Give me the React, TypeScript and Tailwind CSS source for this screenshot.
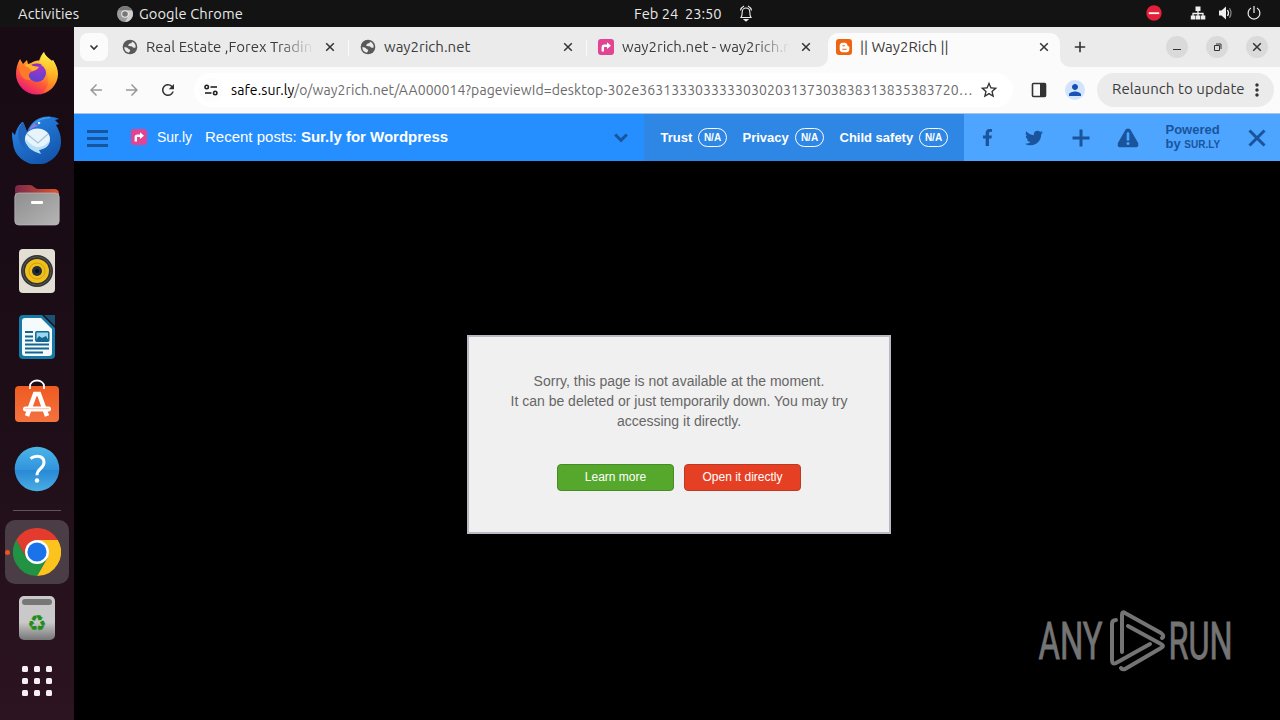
import React from "react";
import { FaBloggerB, FaFacebookF, FaTwitter } from "react-icons/fa";
import { MdArrowBack, MdArrowForward, MdMoreVert, MdPerson, MdRefresh, MdStarBorder } from "react-icons/md";

type TabProps = {
  title: string;
  icon: React.ReactNode;
  active?: boolean;
  divider?: boolean;
  textClass?: string;
};

// hex encoded part of the pageview id, one byte per entry
const pageviewBytes = "30 2e 36 31 33 30 33 33 30 30 20 31 37 30 38 38 31 38 35 38 37 20".split(" ");

const CloseIcon = ({ className = "" }: { className?: string }) => (
  <svg width="16" height="16" viewBox="0 0 16 16" className={className} fill="none" stroke="currentColor" strokeWidth="1.5">
    <path d="M4.2 4.2l7.6 7.6M11.8 4.2l-7.6 7.6" />
  </svg>
);

const GlobeIcon = () => (
  <svg width="16" height="16" viewBox="0 0 16 16" className="-mt-1.5">
    <circle cx="8" cy="8" r="7.300" fill="#58595b" />
    <path d="M7 2.300c2 .2 2.800 1 2.500 2.200C9 6 7.500 5.600 6.800 6.800c-.3.900 1 1 2.200 1 1.600 0 1.700 1.500 1 2.200-1 .8-1.600 1.200-1.400 3.700a5.800 5.800 0 0 0 5-4.200c-.8-.6-1-1.400-1-2.300 0-1.300-.4-2-1.600-2.600.3-.7.600-1 .800-1.400A5.800 5.800 0 0 0 7 2.300z" fill="#ebebeb" opacity="0" />
    <path d="M2.200 8.300c1.500-.2 3 .2 4.200 1.500.7.700 1.800.6 1.800 1.500 0 1-1 1.200-1.200 2.500a5.900 5.900 0 0 1-4.800-5.500z" fill="#ebebeb" />
    <path d="M9.800 2.400c.3 1-.2 1.700-1.300 1.900-1 .1-1.200.8-1.800 1.200-.8.500-.7 1.400.3 1.600 1.200.3 2.500-.2 3.300.6.900.9 1.500 1.500 3.300.9.500-2.700-1-5.200-3.800-6.200z" fill="#ebebeb" />
  </svg>
);

const SurlyIcon = ({ size = 16 }: { size?: number }) => (
  <svg width={size} height={size} viewBox="0 0 16 16" className="shrink-0">
    <rect width="16" height="16" rx="3" fill="#e14493" />
    <path d="M4.8 12.5V8.2Q4.8 6.7 6.3 6.7H10" fill="none" stroke="#fff" strokeWidth="2.4" />
    <path d="M9 3.3l4 3.4-4 3.4z" fill="#fff" />
  </svg>
);

function Tab({ title, icon, active, divider, textClass = "" }: TabProps) {
  return (
    <div className="w-[238px] h-[34px] flex shrink-0">
      <div className={`relative w-[232px] h-full pl-2 flex items-center ${active ? "bg-[#fbfbfb] rounded-t-[10px]" : ""}`}>
        {active && (
          <>
            <svg width="10" height="10" className="absolute -left-2.5 bottom-0"><path d="M10 0v10H0A10 10 0 0 0 10 0z" fill="#fbfbfb" /></svg>
            <svg width="10" height="10" className="absolute -right-2.5 bottom-0"><path d="M0 0v10h10A10 10 0 0 1 0 0z" fill="#fbfbfb" /></svg>
          </>
        )}
        <span className="w-4 shrink-0">{icon}</span>
        <span className={`ml-2 w-[168px] mr-2 overflow-hidden whitespace-nowrap leading-5 -mt-1.5 text-[15px] text-[#3c3c3c] ${textClass}`}>{title}</span>
        <CloseIcon className="shrink-0 -mt-1.5 text-[#333]" />
      </div>
      {divider && <div className="ml-[2px] mt-[7px] h-4 w-px bg-[#fbfbfb]" />}
    </div>
  );
}

function TopBar() {
  return (
    <header className="h-[27px] bg-[#131313] text-[#e8e8e8] text-[14.67px] flex items-center shrink-0">
      <span className="w-[99px] pl-[18px] tracking-[0.12px]">Activities</span>
      <div className="w-[535px] flex items-center pl-[18px] gap-[6px]">
        <svg width="16" height="16" viewBox="0 0 16 16">
          <circle cx="8" cy="8" r="8" fill="#9b9b9b" />
          <path d="M8 4.2h7A8 8 0 0 1 8 16l3.4-6z" fill="#cfcfcf" />
          <path d="M1.2 4A8 8 0 0 1 15 4.2H8z" fill="#777" />
          <circle cx="8" cy="8" r="3.8" fill="#eee" />
          <circle cx="8" cy="8" r="2.8" fill="#777" />
        </svg>
        <span className="tracking-[0.08px]">Google Chrome</span>
      </div>
      <span className="whitespace-pre w-[104px]">Feb 24  23:50</span>
      <svg width="16" height="18" viewBox="0 0 16 18" fill="none" stroke="#eee" strokeWidth="1.1" className="-mt-0.5">
        <path d="M3 13.5c1.2-1.4 1.2-2.5 1.2-5.5C4.200 5.500 6 4 8 4s3.800 1.500 3.800 4c0 3 0 4.100 1.200 5.500z" />
        <path d="M2.500 6.500C2.800 4.500 4 3 6 2M13.500 6.500C13.200 4.500 12 3 10 2" />
        <path d="M6.300 15.500h3.400L8 17z" fill="#eee" />
      </svg>
      <div className="ml-auto flex items-center">
        <svg width="16" height="16" viewBox="0 0 16 16" className="mr-[28px] -mt-px">
          <circle cx="8" cy="8" r="7.700" fill="#e22039" />
          <path d="M2.800 8.200h10.400" stroke="#fff" strokeWidth="1.800" />
        </svg>
        <svg width="16" height="16" viewBox="0 0 16 16" className="mr-3 -mt-px" fill="#eee">
          <path d="M5.500 1.500h5v4.500h-5zM.8 10.500h4.500v4H.8zM5.800 10.500h4.400v4H5.800zM10.800 10.500h4.500v4h-4.500z" />
          <path d="M8 6v5M3 11V8.500h10V11" fill="none" stroke="#eee" strokeWidth="1.300" />
        </svg>
        <svg width="16" height="16" viewBox="0 0 16 16" className="mr-3 -mt-px">
          <path d="M1 5.500h2.500L8 1.500v13l-4.500-4H1z" fill="#eee" />
          <path d="M9.500 5q2 3 0 6" fill="none" stroke="#eee" strokeWidth="1.300" />
          <path d="M11.500 3.300q3 4.700 0 9.400" fill="none" stroke="#888" strokeWidth="1.200" />
        </svg>
        <svg width="16" height="16" viewBox="0 0 16 16" className="mr-[18px] -mt-px" fill="none" stroke="#eee" strokeWidth="1.200">
          <path d="M5 3.100a5.900 5.900 0 1 0 6 0M8 1v7" />
        </svg>
      </div>
    </header>
  );
}

const FirefoxIcon = () => (
  <svg width="48" height="48" viewBox="0 0 48 48" className="-mt-px">
    <defs>
      <linearGradient id="ff-body" x1="0.85" y1="0.1" x2="0.3" y2="1">
        <stop offset="0" stopColor="#fff44f" />
        <stop offset="0.35" stopColor="#ffae2b" />
        <stop offset="0.65" stopColor="#ff5a36" />
        <stop offset="1" stopColor="#e8187a" />
      </linearGradient>
      <linearGradient id="ff-tail" x1="0" y1="0" x2="0" y2="1">
        <stop offset="0" stopColor="#fff04a" />
        <stop offset="0.600" stopColor="#ffad1f" />
        <stop offset="1" stopColor="#ff6b2c" />
      </linearGradient>
      <radialGradient id="ff-core" cx="0.600" cy="0.200" r="0.800">
        <stop offset="0" stopColor="#a534c8" />
        <stop offset="1" stopColor="#5b42cf" />
      </radialGradient>
    </defs>
    <path d="M7 10l3 5 4-4 1 4 3-1c3-2 7-3 9-2 1-4 2-7 4-9 1 4 5 6 8 9l1-1c3 5 5 9 5 14a21 20.500 0 0 1-42 0c0-5 1-10 4-15z" fill="url(#ff-body)" />
    <path d="M31 3c1 4 5 6 8 9l1-1c6 10 5 21-1 28-4 4-9 5-9 5 7-7 9-21-4-32 1-4 3-7 5-9z" fill="url(#ff-tail)" opacity="0.85" />
    <circle cx="24" cy="24" r="9" fill="url(#ff-core)" />
    <path d="M17 17c2-2 7-4 12-1-2 1-4 0-6 1z" fill="#8a2fc4" />
    <path d="M6 17c5-3 9-3 12 0l7 1c0 3-4 4-7 5-3 2-3 5 0 8-7 1-12-4-12-14z" fill="#ff7a28" />
    <path d="M11 16c4-2 7-1 9 1l6 1c-1 2-4 3-7 4-3-4-5-4-8-6z" fill="#ffb32c" />
  </svg>
);

const ThunderbirdIcon = () => (
  <svg width="50" height="50" viewBox="0 0 50 50">
    <defs>
      <linearGradient id="tb" x1="0" y1="0" x2="0.600" y2="1">
        <stop offset="0" stopColor="#2a8cf0" />
        <stop offset="1" stopColor="#1456ad" />
      </linearGradient>
    </defs>
    <path d="M11 8c2 4 3 7 4 10C19 7 29 1 40 3c3 0 5 1 7 2l-4 1 4 4-3 1c3 5 5 10 5 16a24 22.500 0 0 1-48 2c-1-5-1-8-1-11l3 3c1-5 3-9 7-13z" fill="url(#tb)" />
    <path d="M11 8c2 4 3 7 4 10-3 5-4 12 0 18C7 31 5 23 7 14z" fill="#1f65bb" />
    <path d="M18 15c4-8 12-11 20-11.500" fill="none" stroke="#4aa6f5" strokeWidth="1.200" />
    <ellipse cx="25.500" cy="25" rx="12.500" ry="10.500" fill="#e7f4fb" />
    <path d="M14 25c0 8 5 12 15 15l-2-4c6-1 11-4 11-11-2 5-7 8-12 8s-9-4-12-8z" fill="#b4dff7" />
    <path d="M15 20l11 9 10-9" fill="none" stroke="#a6c5d8" strokeWidth="1.200" />
    <path d="M17 17c2-5 4-7 6-7l4 2c-3 0-7 2-10 5z" fill="#8b7bdc" />
    <circle cx="27" cy="9" r="1.300" fill="#d6eeff" />
  </svg>
);

const FilesIcon = () => (
  <svg width="46" height="42" viewBox="0 0 46 42">
    <defs>
      <linearGradient id="fold"><stop offset="0" stopColor="#7a2749" /><stop offset="1" stopColor="#e0572c" /></linearGradient>
      <linearGradient id="front" x1="0" y1="0" x2="1" y2="1"><stop offset="0" stopColor="#8e8e8e" /><stop offset="1" stopColor="#b5b5b5" /></linearGradient>
    </defs>
    <path d="M1 14V5q0-4 4-4h11q2 0 4 2t4 2h16q5 0 5 5v6z" fill="url(#fold)" />
    <rect x="0.800" y="9" width="44.400" height="32" rx="4" fill="url(#front)" stroke="#bdbdbd" strokeWidth="0.700" />
    <rect x="17" y="17" width="12" height="3" rx="1" fill="#fff" />
  </svg>
);

const SpeakerIcon = () => (
  <svg width="38" height="46" viewBox="0 0 38 46">
    <rect x="1" y="1" width="36" height="44" rx="4" fill="#e2ded4" />
    <circle cx="19" cy="23" r="16" fill="#333432" />
    <circle cx="19" cy="23" r="14.200" fill="none" stroke="#585955" />
    <circle cx="19" cy="23" r="12" fill="#efc01c" />
    <circle cx="19" cy="23" r="8" fill="none" stroke="#c9970f" strokeWidth="0.800" />
    <circle cx="19" cy="23" r="5" fill="#202d38" />
    <circle cx="19" cy="23" r="2" fill="#081018" />
  </svg>
);

const WriterIcon = () => (
  <svg width="38" height="46" viewBox="0 0 38 46">
    <path d="M5 1h19l13 13v27q0 4-4 4H5q-4 0-4-4V5q0-4 4-4z" fill="#1779a6" />
    <path d="M7 4h16l11 11v24q0 3-3 3H7q-3 0-3-3V7q0-3 3-3z" fill="#f5fafc" />
    <path d="M26 1h11v11z" fill="#1a5276" />
    <path d="M7 18h8M7 22.500h8M7 26.500h8M7 30.500h24M7 34.500h24M7 38.500h18" stroke="#13668f" strokeWidth="2" />
    <rect x="17.800" y="17.800" width="13" height="9.500" rx="1" fill="#9bd7f3" stroke="#13668f" strokeWidth="1.500" />
    <path d="M18 26l3-4 3 2 4-2 3 5H18z" fill="#13668f" />
  </svg>
);

const SoftwareIcon = () => (
  <svg width="46" height="46" viewBox="0 0 46 46" className="-mt-[5px]">
    <defs>
      <linearGradient id="bag" x1="0" y1="0" x2="0" y2="1"><stop offset="0" stopColor="#ef5a22" /><stop offset="1" stopColor="#f4733f" /></linearGradient>
    </defs>
    <rect x="1" y="8" width="44" height="36" rx="4" fill="url(#bag)" />
    <path d="M16 11V8a7 5.500 0 0 1 14 0v3" fill="none" stroke="#fff" strokeWidth="1.800" />
    <path d="M13 38l8-22h4l8 22" fill="none" stroke="#fff" strokeWidth="4.500" />
    <rect x="9" y="28.500" width="28" height="5" rx="2.500" fill="#fff" />
    <path d="M11 30.700h24" stroke="#f8b497" strokeWidth="0.800" />
  </svg>
);

const HelpIcon = () => (
  <svg width="46" height="46" viewBox="0 0 46 46">
    <defs>
      <linearGradient id="help" x1="0" y1="0" x2="0" y2="1"><stop offset="0" stopColor="#4bb5e8" /><stop offset="0.520" stopColor="#3294dc" /><stop offset="0.520" stopColor="#2788d4" /><stop offset="1" stopColor="#4baee5" /></linearGradient>
    </defs>
    <circle cx="23" cy="23" r="22.300" fill="url(#help)" />
    <path d="M16.500 12.500q3-2.300 6.500-2.300c4.500 0 7 2.300 7 6 0 6.500-7 6.500-7 13" fill="none" stroke="#fff" strokeWidth="3" />
    <circle cx="23" cy="34.500" r="2.200" fill="#fff" />
  </svg>
);

const ChromeIcon = () => (
  <svg width="48" height="48" viewBox="0 0 48 48">
    <path d="M3.200 12A24 24 0 0 1 44.800 12H24L13.600 30z" fill="#e33b2e" />
    <path d="M44.800 12A24 24 0 0 1 24 48L34.400 30 24 12z" fill="#fcc31e" />
    <path d="M24 48A24 24 0 0 1 3.200 12l10.400 18h20.800z" fill="#229342" />
    <circle cx="24" cy="24" r="12" fill="#fff" />
    <circle cx="24" cy="24" r="9.600" fill="#1a73e8" />
  </svg>
);

const DockItem = ({ children }: { children: React.ReactNode }) => (
  <div className="h-[66px] shrink-0 flex items-center justify-center">{children}</div>
);

function Dock() {
  return (
    <nav className="w-[74px] shrink-0 pt-[13px] bg-gradient-to-b from-[#180b14] via-[#1c0d17] to-[#2c1420] flex flex-col">
      <DockItem><FirefoxIcon /></DockItem>
      <DockItem><ThunderbirdIcon /></DockItem>
      <DockItem><FilesIcon /></DockItem>
      <DockItem><SpeakerIcon /></DockItem>
      <DockItem><WriterIcon /></DockItem>
      <DockItem><SoftwareIcon /></DockItem>
      <DockItem><HelpIcon /></DockItem>
      <div className="mx-[13px] my-2 h-px shrink-0 bg-[#5f545b]" />
      <DockItem>
        <div className="relative size-16 rounded-[10px] bg-[#4a3d45] flex items-center justify-center">
          <span className="absolute left-0 size-[5px] rounded-full bg-[#e95420]" />
          <ChromeIcon />
        </div>
      </DockItem>
      <DockItem>
        <div className="w-9 h-11 rounded-[5px] bg-gradient-to-b from-[#c9c9c9] from-60% to-[#777] flex flex-col items-center">
          <div className="mt-[3px] w-[30px] h-[6px] rounded-[3px] bg-[#777]" />
          <span className="mt-[7px] h-6 leading-6 text-[22px] text-[#258d20] font-['DejaVu_Sans',sans-serif]">♻</span>
        </div>
      </DockItem>
      <div className="h-[60px] flex items-center justify-center">
        <div className="grid grid-cols-3 gap-[6px]">
          {Array.from({ length: 9 }, (_, i) => (
            <span key={i} className="size-[6px] rounded-[1.5px] bg-[#f7eff5]" />
          ))}
        </div>
      </div>
    </nav>
  );
}

function TabStrip() {
  return (
    <div className="h-10 pt-[6px] pl-[6px] bg-[#ebebeb] flex shrink-0">
      <button className="size-7 mr-[6px] rounded-[8px] bg-[#fbfbfb] flex items-center justify-center">
        <svg width="10" height="7" viewBox="0 0 10 7" fill="none" stroke="#333" strokeWidth="1.600"><path d="M1.500 1.500L5 5l3.500-3.500" /></svg>
      </button>
      <Tab title="Real Estate ,Forex Trading" icon={<GlobeIcon />} divider textClass="mask-r-from-78%" />
      <Tab title="way2rich.net" icon={<GlobeIcon />} divider />
      <Tab title="way2rich.net - way2rich.net" icon={<div className="-mt-1.5"><SurlyIcon /></div>} textClass="mask-r-from-78%" />
      <Tab
        title="|| Way2Rich ||"
        active
        icon={<div className="size-4 -mt-1.5 rounded-[3px] bg-[#ee6411] flex items-center justify-center text-white"><FaBloggerB size={11} /></div>}
      />
      <svg width="12" height="12" viewBox="0 0 12 12" className="mt-2 ml-2" stroke="#333" strokeWidth="1.600"><path d="M6 .8v10.400M.8 6h10.400" /></svg>
      <div className="ml-auto mr-3 mt-[3px] flex gap-[18px] text-[#333]">
        <span className="size-[22px] rounded-full bg-[#dadada] flex items-center justify-center"><span className="mt-[5px] w-2 h-px bg-[#333]" /></span>
        <span className="size-[22px] rounded-full bg-[#dadada] flex items-center justify-center">
          <svg width="9" height="9" viewBox="0 0 9 9" fill="none" stroke="#333"><path d="M1.500 2.500h5v5h-5zM3 1h5v5" /></svg>
        </span>
        <span className="size-[22px] rounded-full bg-[#dadada] flex items-center justify-center"><CloseIcon /></span>
      </div>
    </div>
  );
}

function Toolbar() {
  return (
    <div className="h-[47px] pb-px bg-[#fbfbfb] border-b border-[#a9c4e4] flex items-center shrink-0">
      <MdArrowBack size={18} className="ml-[13px] text-[#999]" />
      <MdArrowForward size={18} className="ml-[18px] text-[#999]" />
      <MdRefresh size={18} className="ml-[18px] text-[#333]" />
      <div className="ml-[17px] w-[819px] h-[34px] rounded-full bg-white flex items-center">
        <div className="ml-[5px] size-6 rounded-full bg-[#fcfcfc] flex items-center justify-center shrink-0">
          <svg width="14" height="12" viewBox="0 0 14 12" fill="none" stroke="#222" strokeWidth="1.600">
            <circle cx="2.700" cy="3" r="1.700" /><path d="M6.500 3H13" />
            <circle cx="11.200" cy="9" r="1.700" /><path d="M1 9h6.500" />
          </svg>
        </div>
        <span className="ml-2 w-[743px] pt-px overflow-hidden whitespace-nowrap text-[14px] text-[#6b6b6b] tracking-[0.09px]">
          <span className="text-black">safe.sur.ly</span>
          {`/o/way2rich.net/AA000014?pageviewId=desktop-${pageviewBytes.join("")}…`}
        </span>
        <MdStarBorder size={20} className="ml-[5px] shrink-0 text-[#333]" />
      </div>
      <svg width="16" height="16" viewBox="0 0 16 16" className="ml-[18px]">
        <rect x="1.500" y="1.500" width="13" height="13" rx="1" fill="none" stroke="#333" strokeWidth="1.600" />
        <path d="M9 1.500h5.500v13H9z" fill="#333" />
      </svg>
      <span className="ml-[18px] size-5 rounded-full bg-[#d3e3fd] flex items-center justify-center"><MdPerson size={18} className="text-[#1452b8]" /></span>
      <div className="ml-3 w-[177px] h-[34px] rounded-full bg-[#ebebeb] flex items-center pl-[15px] text-[15px] text-[#3c3c3c]">
        <span className="w-[135px] whitespace-nowrap tracking-[0.07px]">Relaunch to update</span>
        <MdMoreVert size={20} className="text-[#333]" />
      </div>
    </div>
  );
}

const Rating = ({ label, className }: { label: string; className: string }) => (
  <span className={`flex items-center justify-between ${className}`}>
    {label}
    <span className="w-[29px] h-[19px] rounded-full border border-white text-[10px] flex items-center justify-center">N/A</span>
  </span>
);

function SurlyBar() {
  return (
    <div className="h-[47px] bg-[#268fff] flex items-stretch shrink-0 text-white font-['Liberation_Sans',Arial,sans-serif]">
      <div className="w-[570px] flex items-center pl-[13px]">
        <div className="w-[21px] flex flex-col gap-[4.500px] pt-[2px]">
          <span className="h-[2.500px] bg-[#17569c]" />
          <span className="h-[2.500px] bg-[#17569c]" />
          <span className="h-[2.500px] bg-[#17569c]" />
        </div>
        <div className="ml-[23px] -mt-px"><SurlyIcon /></div>
        <span className="ml-[10px] w-12 text-[14px]">Sur.ly</span>
        <span className="text-[15px]">Recent posts: <b>Sur.ly for Wordpress</b></span>
        <svg width="14" height="10" viewBox="0 0 14 10" className="ml-auto mr-4" fill="none" stroke="#17569c" strokeWidth="3"><path d="M1.200 1.500L7 7.300l5.800-5.800" /></svg>
      </div>
      <div className="w-80 pl-[16.500px] bg-[#2e86e5] flex items-center text-[13px] font-bold">
        <Rating label="Trust" className="w-[66.500px]" />
        <Rating label="Privacy" className="w-[81.500px] ml-[15.500px]" />
        <Rating label="Child safety" className="w-[108.500px] ml-[15.500px]" />
      </div>
      <div className="flex-1 bg-[#4da5ff] text-[#1a549c] flex items-center">
        <FaFacebookF size={17} className="ml-[15px]" />
        <FaTwitter size={18} className="ml-[29px]" />
        <svg width="18" height="18" viewBox="0 0 18 18" className="ml-[29px] mt-px" stroke="#1a549c" strokeWidth="3"><path d="M9 .5v17M.5 9h17" /></svg>
        <svg width="22" height="20" viewBox="0 0 22 20" className="ml-[27px]">
          <path d="M10 2.500h2L19.500 15.500v2h-17v-2z" fill="#1a549c" stroke="#1a549c" strokeWidth="3.500" strokeLinejoin="round" />
          <path d="M11 5.500v6" stroke="#4da5ff" strokeWidth="2.600" strokeLinecap="round" /><circle cx="11" cy="15.500" r="1.500" fill="#4da5ff" />
        </svg>
        <div className="ml-[26.500px] -mt-px w-[56px] text-[13px] leading-[14px] font-bold">Powered<br />by <span className="text-[10px]">SUR.LY</span></div>
        <svg width="18" height="18" viewBox="0 0 18 18" className="ml-[26px] mt-px" stroke="#1a549c" strokeWidth="3"><path d="M1.500 1.500l15 15M16.500 1.500l-15 15" /></svg>
      </div>
    </div>
  );
}

function AnyRunLogo() {
  return (
    <svg width="196" height="66" viewBox="0 0 196 66" className="absolute left-[964px] bottom-[46px]">
      <g fill="#747474" stroke="#747474" strokeWidth="0.900" fontFamily="Roboto, sans-serif" fontSize="51">
        <text x="0.500" y="51" textLength="64" lengthAdjust="spacingAndGlyphs">ANY</text>
        <text x="130.500" y="51" textLength="64" lengthAdjust="spacingAndGlyphs">RUN</text>
      </g>
      <g fill="none" stroke="#747474" strokeWidth="4" strokeLinejoin="round" strokeLinecap="round">
        <path d="M84 44V7q0-4 3-2l36 20q4 3 1 5" />
        <path d="M78 12q-4 0-4 4v36q0 5 4 3l34-19" />
        <path d="M90 18l33 18q4 2 0 4L87 61q-3 1-4-1" />
      </g>
    </svg>
  );
}

function PageContent() {
  return (
    <main className="relative flex-1 bg-black font-['Liberation_Sans',Arial,sans-serif]">
      <section className="ml-[393px] mt-[174px] w-[424px] h-[199px] border-2 border-[#b9bac6] bg-[#f0f0f0] flex flex-col items-center">
        <p className="mt-[34px] w-[350px] text-center text-[14px] leading-5 text-[#666]">
          Sorry, this page is not available at the moment.<br />
          It can be deleted or just temporarily down. You may try accessing it directly.
        </p>
        <div className="mt-[33px] flex gap-[10px] text-[12px] text-white">
          <button className="w-[117px] h-[27px] pb-0.5 rounded-[4px] border border-[#468c26] bg-[#55a82c]">Learn more</button>
          <button className="w-[117px] h-[27px] pb-0.5 rounded-[4px] border border-[#bd3921] bg-[#e64024]">Open it directly</button>
        </div>
      </section>
      <AnyRunLogo />
    </main>
  );
}

export default function App() {
  return (
    <div className="w-[1280px] h-[720px] overflow-hidden flex flex-col bg-black font-['Ubuntu','Noto_Sans',sans-serif]">
      <TopBar />
      <div className="flex flex-1 min-h-0">
        <Dock />
        <div className="flex-1 min-w-0 flex flex-col">
          <TabStrip />
          <Toolbar />
          <SurlyBar />
          <div className="flex flex-1 flex-col bg-black">
            <PageContent />
          </div>
        </div>
      </div>
    </div>
  );
}
